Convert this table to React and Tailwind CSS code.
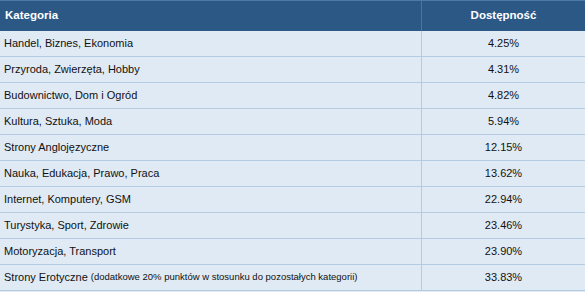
export default function App() {
  const rows = [
    ["Handel, Biznes, Ekonomia", "4.25%"],
    ["Przyroda, Zwierzęta, Hobby", "4.31%"],
    ["Budownictwo, Dom i Ogród", "4.82%"],
    ["Kultura, Sztuka, Moda", "5.94%"],
    ["Strony Anglojęzyczne", "12.15%"],
    ["Nauka, Edukacja, Prawo, Praca", "13.62%"],
    ["Internet, Komputery, GSM", "22.94%"],
    ["Turystyka, Sport, Zdrowie", "23.46%"],
    ["Motoryzacja, Transport", "23.90%"],
  ];
  return (
    <div className="w-[585px] h-[292px] overflow-hidden bg-[#e0eaf4] text-[11px] text-[#111] [font-family:'Liberation_Sans',Arial,sans-serif]">
      <div className="flex h-[31px] bg-[#2c5886] border-t border-[#4d79a8] text-white font-bold text-[11.5px]">
        <div className="w-[421px] pl-[5px] flex items-center">Kategoria</div>
        <div className="w-px bg-[#4a76a6]"></div>
        <div className="flex-1 flex items-center justify-center">Dostępność</div>
      </div>
      {rows.map(([k, v]) => (
        <div key={k} className="flex h-[26px] border-b border-[#b5cbe2]">
          <div className="w-[421px] pl-[4px] flex items-center">{k}</div>
          <div className="w-px bg-[#b5cbe2]"></div>
          <div className="flex-1 flex items-center justify-center">{v}</div>
        </div>
      ))}
      <div className="flex h-[26px] border-b border-[#b5cbe2]">
        <div className="w-[421px] pl-[4px] flex items-center">
          Strony Erotyczne<span className="text-[9.5px] ml-[3px]">(dodatkowe 20% punktów w stosunku do pozostałych kategorii)</span>
        </div>
        <div className="w-px bg-[#b5cbe2]"></div>
        <div className="flex-1 flex items-center justify-center">33.83%</div>
      </div>
    </div>
  );
}
